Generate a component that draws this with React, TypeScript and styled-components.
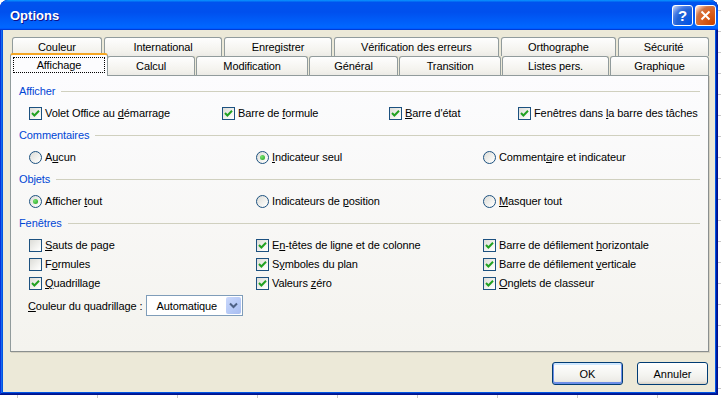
import React from 'react';
import styled, { createGlobalStyle } from 'styled-components';

const GlobalStyle = createGlobalStyle`
  html, body {
    margin: 0;
    padding: 0;
  }
  body {
    width: 721px;
    height: 398px;
    overflow: hidden;
    background-color: #fff;
    background-image:
      linear-gradient(to right, #c8c8c8 1px, transparent 1px),
      linear-gradient(to bottom, #c8c8c8 1px, transparent 1px);
    background-size: 80px 21px;
    background-position: 17px 10px;
    font-family: "Liberation Sans", Arial, sans-serif;
    font-size: 11px;
    letter-spacing: -0.1px;
    color: #000;
  }
`;

const Window = styled.div`
  width: 718px;
  height: 395px;
  display: flex;
  flex-direction: column;
  background: #0054e3;
  border-radius: 8px 8px 0 0;
  overflow: hidden;
  box-shadow: inset -1px -1px #00138c, inset 1px 1px #0831d9, inset -2px -2px #001ea0, inset 2px 2px #166aee;
`;

const TitleBar = styled.div`
  height: 30px;
  flex: none;
  display: flex;
  align-items: center;
  padding: 0 2px 0 10px;
  border-radius: 8px 8px 0 0;
  background: linear-gradient(180deg, #0997ff, #0053ee 8%, #0050ee 40%, #06f 88%, #06f 93%, #005bff 95%, #003dd7 96%, #003dd7);
`;

const Title = styled.div`
  flex: 1;
  padding-top: 1px;
  color: #fff;
  font: bold 13px "Liberation Sans", Arial, sans-serif;
  letter-spacing: 0;
  text-shadow: 1px 1px 0 #0f1089;
`;

const CaptionButtons = styled.div`
  display: flex;
  gap: 2px;
  padding-top: 1px;
`;

const CaptionButton = styled.div<{ $kind: 'help' | 'close' }>`
  width: 21px;
  height: 21px;
  box-sizing: border-box;
  border: 1px solid #fff;
  border-radius: 3px;
  display: flex;
  align-items: center;
  justify-content: center;
  color: #fff;
  font: bold 15px "Liberation Sans", Arial, sans-serif;
  background: ${p =>
    p.$kind === 'close'
      ? 'radial-gradient(circle at 90% 90%, #cc4600 0%, #dc6527 55%, #cd7546 70%, #ffccb2 90%, #fff 100%)'
      : 'radial-gradient(circle at 90% 90%, #0054e9 0%, #2263d5 55%, #4479e4 70%, #a3bbec 90%, #fff 100%)'};
`;

const Body = styled.div`
  flex: 1;
  margin: 0 3px 3px;
  background: #ece9d8;
  display: flex;
  flex-direction: column;
  padding: 7px 6px 0 7px;
`;

const TabStrip = styled.div`
  position: relative;
  z-index: 1;
  display: flex;
  flex-direction: column;
`;

const TabRow = styled.div<{ $gap: number }>`
  display: flex;
  height: 19px;
  gap: ${p => p.$gap}px;
  padding-left: 2px;
`;

const Tab = styled.div<{ $grow: number; $active?: boolean }>`
  flex: ${p => p.$grow} 1 0;
  min-width: 0;
  box-sizing: border-box;
  display: flex;
  align-items: center;
  justify-content: center;
  white-space: nowrap;
  border: 1px solid #919b9c;
  border-bottom: none;
  border-radius: 3px 3px 0 0;
  height: ${p => (p.$active ? 23 : 19)}px;
  margin: ${p => (p.$active ? '-3px -2px 0' : '0')};
  background: ${p => (p.$active ? '#fcfcfe' : 'linear-gradient(#fefefe, #f4f3ee 70%, #ecebe6)')};
  border-top: ${p => (p.$active ? '2px solid #f5a623' : '1px solid #919b9c')};
  padding-bottom: ${p => (p.$active ? 2 : 0)}px;
  position: relative;
  z-index: ${p => (p.$active ? 2 : 0)};
`;

const FocusRect = styled.span`
  flex: 1;
  margin: 0 3px;
  text-align: center;
  line-height: 14px;
  outline: 1px dotted #000;
`;

const Panel = styled.div`
  height: 277px;
  flex: none;
  box-sizing: border-box;
  border: 1px solid #919b9c;
  border-right-color: #8a8f8f;
  border-bottom-color: #8a8f8f;
  box-shadow: 1px 1px 0 #d6d2c2;
  background: linear-gradient(#fcfcfe, #f4f3ee);
  padding: 8px 8px 0 8px;
`;

const GroupHeader = styled.div<{ $first?: boolean }>`
  display: flex;
  align-items: center;
  gap: 6px;
  height: 14px;
  margin-top: ${p => (p.$first ? 0 : 8)}px;
  color: #0046d5;
  &::after {
    content: '';
    flex: 1;
    height: 1px;
    background: #d0d0bf;
  }
`;

const OptionGrid = styled.div<{ $cols: string }>`
  display: grid;
  grid-template-columns: ${p => p.$cols};
  row-gap: 5px;
  margin-top: 8px;
  padding-left: 10px;
`;

const Option = styled.label`
  display: flex;
  align-items: center;
  gap: 3px;
  height: 14px;
  line-height: 14px;
  white-space: nowrap;
`;

const CheckBox = styled.span`
  width: 13px;
  height: 13px;
  flex: none;
  box-sizing: border-box;
  border: 1px solid #1c5180;
  background: linear-gradient(135deg, #dcdcd7, #fafaf8 80%, #fff);
  display: flex;
  align-items: center;
  justify-content: center;
`;

const RadioBox = styled.span`
  width: 13px;
  height: 13px;
  flex: none;
  box-sizing: border-box;
  border: 1px solid #1c5180;
  border-radius: 50%;
  background: linear-gradient(135deg, #dcdcd7, #fafaf8 80%, #fff);
  display: flex;
  align-items: center;
  justify-content: center;
`;

const RadioDot = styled.span`
  width: 5px;
  height: 5px;
  border-radius: 50%;
  background: radial-gradient(circle at 35% 35%, #78e36f, #21a121);
`;

const ColorRow = styled.div`
  display: flex;
  align-items: center;
  gap: 4px;
  margin-top: 5px;
  padding-left: 9px;
`;

const Select = styled.div`
  width: 97px;
  height: 21px;
  box-sizing: border-box;
  border: 1px solid #7f9db9;
  background: #fff;
  display: flex;
  align-items: center;
  padding: 0 1px 0 9px;
`;

const SelectValue = styled.span`
  flex: 1;
`;

const DropButton = styled.span`
  width: 15px;
  height: 17px;
  border-radius: 2px;
  background: linear-gradient(135deg, #cad8fb, #b4c8f6 60%, #a9bdf0);
  display: flex;
  align-items: center;
  justify-content: center;
`;

const ButtonBar = styled.div`
  display: flex;
  justify-content: flex-end;
  gap: 14px;
  margin-top: 10px;
  padding-right: 1px;
`;

const Button = styled.button<{ $default?: boolean }>`
  width: 71px;
  height: 23px;
  box-sizing: border-box;
  border: 1px solid #003c74;
  border-radius: 3px;
  font: 11px "Liberation Sans", Arial, sans-serif;
  color: #000;
  padding: 0;
  background: linear-gradient(180deg, #fff, #f3f3ef 60%, #ecebe6 86%, #d6d0c5);
  box-shadow: ${p => (p.$default ? 'inset 0 -1px 0 1px #6d8fe8, inset 0 1px 0 1px #cee7ff' : 'none')};
`;

const Mnemonic = ({ text }: { text: string }) => {
  const i = text.indexOf('&');
  if (i < 0) return <>{text}</>;
  return (
    <>
      {text.slice(0, i)}
      <u>{text[i + 1]}</u>
      {text.slice(i + 2)}
    </>
  );
};

const Check = ({ label, checked }: { label: string; checked: boolean }) => (
  <Option>
    <CheckBox>
      {checked && (
        <svg width="9" height="9" viewBox="0 0 9 9">
          <path d="M1 4 L3.4 6.5 L8 1.8" fill="none" stroke="#21a121" strokeWidth="2" />
        </svg>
      )}
    </CheckBox>
    <span><Mnemonic text={label} /></span>
  </Option>
);

const Radio = ({ label, checked }: { label: string; checked: boolean }) => (
  <Option>
    <RadioBox>{checked && <RadioDot />}</RadioBox>
    <span><Mnemonic text={label} /></span>
  </Option>
);

const backTabs = [
  { label: 'Couleur', w: 89 },
  { label: 'International', w: 118 },
  { label: 'Enregistrer', w: 107 },
  { label: 'Vérification des erreurs', w: 165 },
  { label: 'Orthographe', w: 115 },
  { label: 'Sécurité', w: 90 },
];

const frontTabs = [
  { label: 'Affichage', w: 97, active: true },
  { label: 'Calcul', w: 87 },
  { label: 'Modification', w: 111 },
  { label: 'Général', w: 88 },
  { label: 'Transition', w: 101 },
  { label: 'Listes pers.', w: 106 },
  { label: 'Graphique', w: 98 },
];

const THREE_COLS = '227px 227px 1fr';

const App: React.FC = () => (
  <>
    <GlobalStyle />
    <Window>
      <TitleBar>
        <Title>Options</Title>
        <CaptionButtons>
          <CaptionButton $kind="help">?</CaptionButton>
          <CaptionButton $kind="close">
            <svg width="11" height="11" viewBox="0 0 11 11">
              <path d="M1.5 1.5 L9.5 9.5 M9.5 1.5 L1.5 9.5" stroke="#fff" strokeWidth="2" />
            </svg>
          </CaptionButton>
        </CaptionButtons>
      </TitleBar>

      <Body>
        <TabStrip>
          <TabRow $gap={2}>
            {backTabs.map(t => (
              <Tab key={t.label} $grow={t.w}>{t.label}</Tab>
            ))}
          </TabRow>
          <TabRow $gap={1}>
            {frontTabs.map(t => (
              <Tab key={t.label} $grow={t.w} $active={t.active}>
                {t.active ? <FocusRect>{t.label}</FocusRect> : t.label}
              </Tab>
            ))}
          </TabRow>
        </TabStrip>

        <Panel>
          <GroupHeader $first>Afficher</GroupHeader>
          <OptionGrid $cols="193px 167px 129px 1fr">
            <Check label="Volet Office au &démarrage" checked />
            <Check label="Barre de &formule" checked />
            <Check label="&Barre d'état" checked />
            <Check label="Fenêtres dans &la barre des tâches" checked />
          </OptionGrid>

          <GroupHeader>Commentaires</GroupHeader>
          <OptionGrid $cols={THREE_COLS}>
            <Radio label="A&ucun" checked={false} />
            <Radio label="&Indicateur seul" checked />
            <Radio label="Comment&aire et indicateur" checked={false} />
          </OptionGrid>

          <GroupHeader>Objets</GroupHeader>
          <OptionGrid $cols={THREE_COLS}>
            <Radio label="Afficher &tout" checked />
            <Radio label="Indicateurs de &position" checked={false} />
            <Radio label="&Masquer tout" checked={false} />
          </OptionGrid>

          <GroupHeader>Fenêtres</GroupHeader>
          <OptionGrid $cols={THREE_COLS}>
            <Check label="&Sauts de page" checked={false} />
            <Check label="E&n-têtes de ligne et de colonne" checked />
            <Check label="Barre de défilement &horizontale" checked />
            <Check label="F&ormules" checked={false} />
            <Check label="S&ymboles du plan" checked />
            <Check label="Barre de défilement &verticale" checked />
            <Check label="&Quadrillage" checked />
            <Check label="Valeurs &zéro" checked />
            <Check label="&Onglets de classeur" checked />
          </OptionGrid>

          <ColorRow>
            <span><Mnemonic text="&Couleur du quadrillage :" /></span>
            <Select>
              <SelectValue>Automatique</SelectValue>
              <DropButton>
                <svg width="9" height="7" viewBox="0 0 9 7">
                  <path d="M1 1.5 L4.5 5 L8 1.5" fill="none" stroke="#4d6185" strokeWidth="2" />
                </svg>
              </DropButton>
            </Select>
          </ColorRow>
        </Panel>

        <ButtonBar>
          <Button $default>OK</Button>
          <Button>Annuler</Button>
        </ButtonBar>
      </Body>
    </Window>
  </>
);

export default App;
